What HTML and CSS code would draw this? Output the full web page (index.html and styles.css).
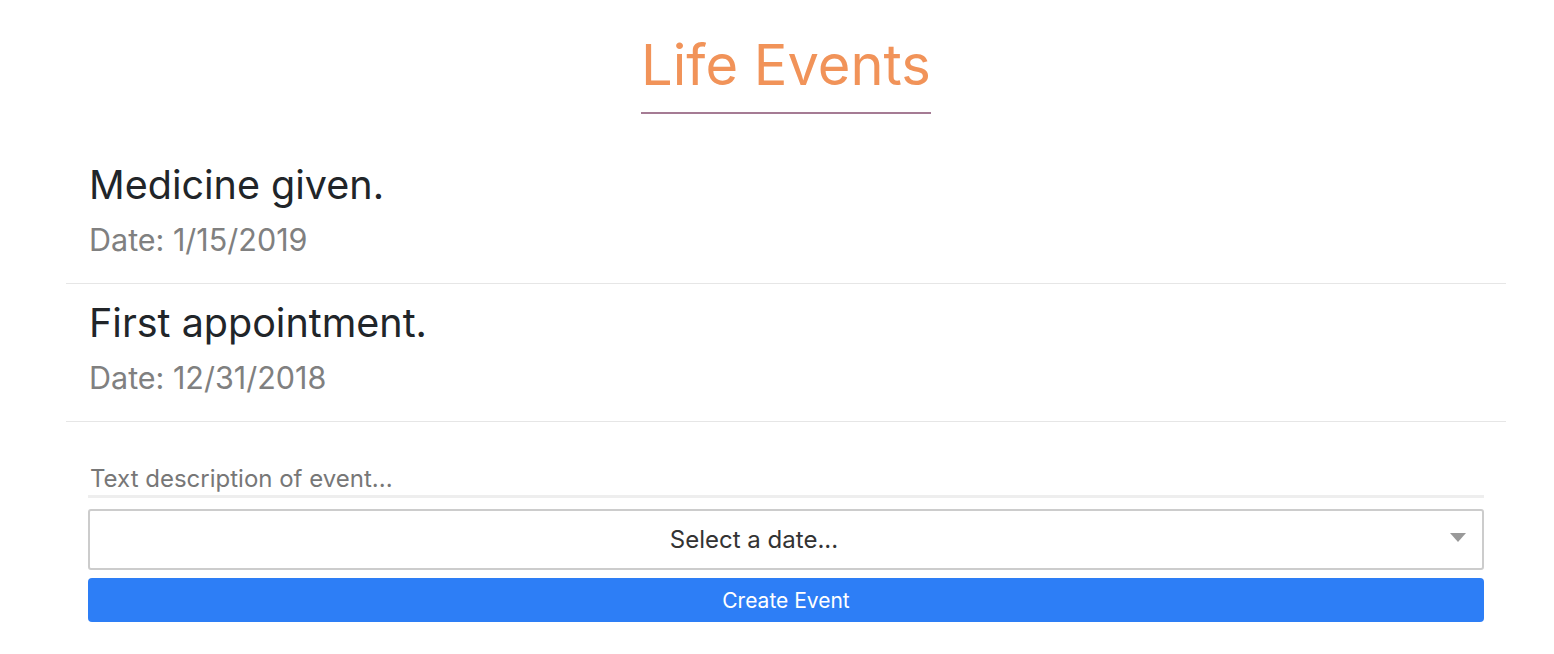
FILE: index.html
```html
<!DOCTYPE html>
<html>
<head>
<meta charset="utf-8">
<link rel="stylesheet" href="styles.css">
</head>
<body>
<div class="page">
  <div class="title-wrap"><h1 class="title">Life Events</h1></div>
  <ul class="events">
    <li class="event">
      <div class="event-name">Medicine given.</div>
      <div class="event-date">Date: 1/15/2019</div>
    </li>
    <li class="event">
      <div class="event-name">First appointment.</div>
      <div class="event-date">Date: 12/31/2018</div>
    </li>
  </ul>
  <form class="form">
    <input class="desc" type="text" placeholder="Text description of event...">
    <div class="select">
      <span class="select-text">Select a date...</span>
      <span class="arrow"></span>
    </div>
    <button class="btn" type="button">Create Event</button>
  </form>
</div>
</body>
</html>
```
FILE: styles.css
```css
* { box-sizing: border-box; }
body {
  margin: 0;
  font-family: Inter, "Noto Sans", sans-serif;
  background: #fff;
}
.page {
  margin-left: 66px;
  width: 1440px;
  padding-top: 30px;
}
.title-wrap { display: flex; justify-content: center; }
.title {
  margin: 0;
  font-size: 56px;
  font-weight: 400;
  color: #f19359;
  line-height: 70px;
  padding-bottom: 12px;
  border-bottom: 2px solid #a57b94;
}
.events {
  list-style: none;
  margin: 32px 0 0;
  padding: 0;
}
.event {
  height: 138px;
  padding: 14px 23px 0;
  border-bottom: 1px solid #e6e6e6;
}
.event-name {
  font-size: 39.5px;
  line-height: 50px;
  color: #212529;
}
.event-date {
  font-size: 30.5px;
  line-height: 40px;
  color: #808080;
  margin-top: 10px;
}
.form {
  padding: 40px 22px 0;
  display: flex;
  flex-direction: column;
}
.desc {
  font-family: inherit;
  font-size: 24px;
  border: none;
  border-bottom: 3px solid #eeeeee;
  padding: 2px 2px 2px;
  height: 36px;
  outline: none;
}
.desc::placeholder { color: #777; }
.select {
  margin-top: 11px;
  height: 61px;
  border: 2px solid #cccccc;
  border-radius: 3px;
  display: flex;
  align-items: center;
  justify-content: center;
  padding-right: 64px;
  position: relative;
}
.select-text { font-size: 24px; color: #333; }
.arrow {
  position: absolute;
  right: 16px;
  top: 22px;
  width: 0; height: 0;
  border-left: 8px solid transparent;
  border-right: 8px solid transparent;
  border-top: 9px solid #999;
}
.btn {
  margin-top: 8px;
  height: 44px;
  border: none;
  border-radius: 4px;
  background: #2d7ef6;
  color: #fff;
  font-family: inherit;
  font-size: 21px;
}
```
